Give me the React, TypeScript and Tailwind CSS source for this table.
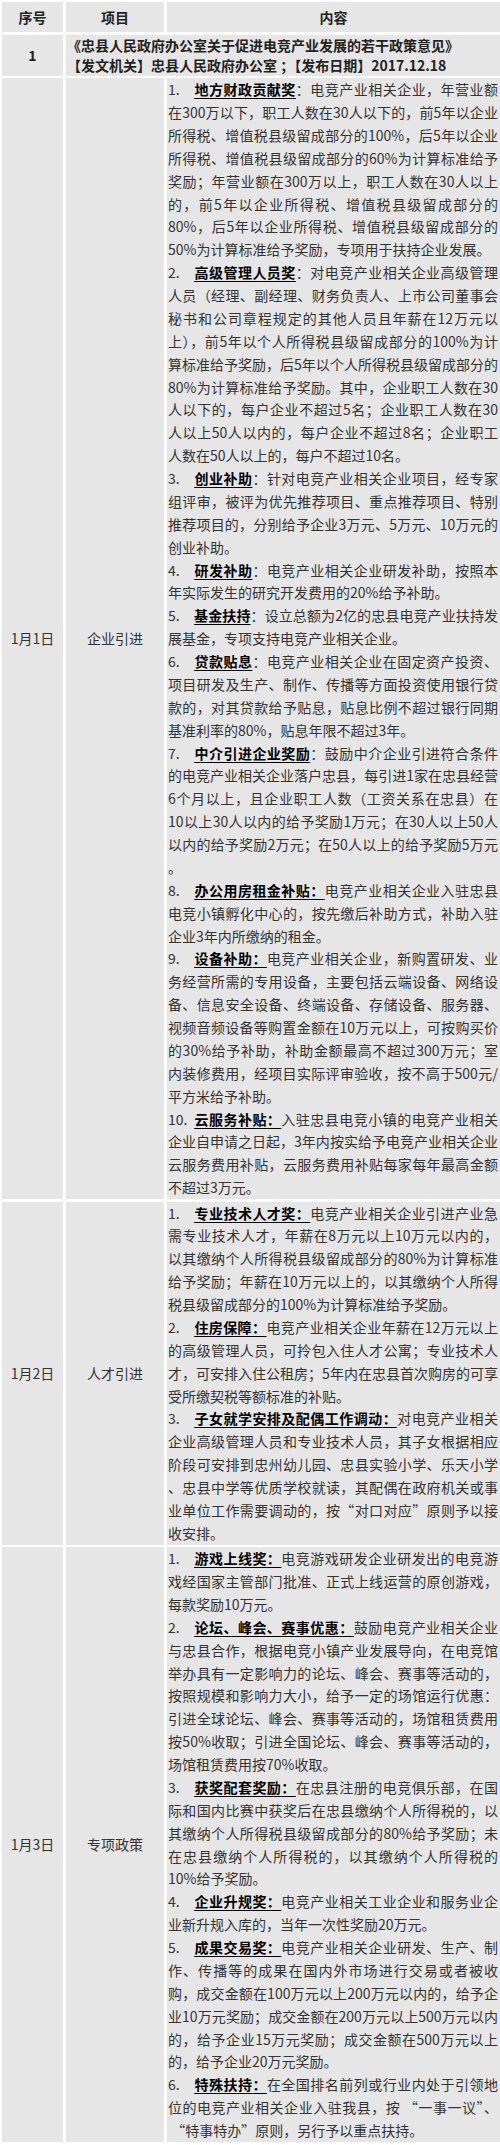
import React from 'react'

type Item = {
  n: string
  label: string
  boldColon?: boolean
  first: string
  rest: string[]
}

const row1: Item[] = [
  {
    n: '1.',
    label: '地方财政贡献奖',
    first: '电竞产业相关企业，年营业额',
    rest: [
      '在300万以下，职工人数在30人以下的，前5年以企业',
      '所得税、增值税县级留成部分的100%，后5年以企业',
      '所得税、增值税县级留成部分的60%为计算标准给予',
      '奖励；年营业额在300万以上，职工人数在30人以上',
      '的，前5年以企业所得税、增值税县级留成部分的',
      '80%，后5年以企业所得税、增值税县级留成部分的',
      '50%为计算标准给予奖励，专项用于扶持企业发展。',
    ],
  },
  {
    n: '2.',
    label: '高级管理人员奖',
    first: '对电竞产业相关企业高级管理',
    rest: [
      '人员（经理、副经理、财务负责人、上市公司董事会',
      '秘书和公司章程规定的其他人员且年薪在12万元以',
      '上），前5年以个人所得税县级留成部分的100%为计',
      '算标准给予奖励，后5年以个人所得税县级留成部分的',
      '80%为计算标准给予奖励。其中，企业职工人数在30',
      '人以下的，每户企业不超过5名；企业职工人数在30',
      '人以上50人以内的，每户企业不超过8名；企业职工',
      '人数在50人以上的，每户不超过10名。',
    ],
  },
  {
    n: '3.',
    label: '创业补助',
    first: '针对电竞产业相关企业项目，经专家',
    rest: [
      '组评审，被评为优先推荐项目、重点推荐项目、特别',
      '推荐项目的，分别给予企业3万元、5万元、10万元的',
      '创业补助。',
    ],
  },
  {
    n: '4.',
    label: '研发补助',
    first: '电竞产业相关企业研发补助，按照本',
    rest: ['年实际发生的研究开发费用的20%给予补助。'],
  },
  {
    n: '5.',
    label: '基金扶持',
    first: '设立总额为2亿的忠县电竞产业扶持发',
    rest: ['展基金，专项支持电竞产业相关企业。'],
  },
  {
    n: '6.',
    label: '贷款贴息',
    first: '电竞产业相关企业在固定资产投资、',
    rest: [
      '项目研发及生产、制作、传播等方面投资使用银行贷',
      '款的，对其贷款给予贴息，贴息比例不超过银行同期',
      '基准利率的80%，贴息年限不超过3年。',
    ],
  },
  {
    n: '7.',
    label: '中介引进企业奖励',
    first: '鼓励中介企业引进符合条件',
    rest: [
      '的电竞产业相关企业落户忠县，每引进1家在忠县经营',
      '6个月以上，且企业职工人数（工资关系在忠县）在',
      '10以上30人以内的给予奖励1万元；在30人以上50人',
      '以内的给予奖励2万元；在50人以上的给予奖励5万元',
      '。',
    ],
  },
  {
    n: '8.',
    label: '办公用房租金补贴',
    boldColon: true,
    first: '电竞产业相关企业入驻忠县',
    rest: ['电竞小镇孵化中心的，按先缴后补助方式，补助入驻', '企业3年内所缴纳的租金。'],
  },
  {
    n: '9.',
    label: '设备补助',
    boldColon: true,
    first: '电竞产业相关企业，新购置研发、业',
    rest: [
      '务经营所需的专用设备，主要包括云端设备、网络设',
      '备、信息安全设备、终端设备、存储设备、服务器、',
      '视频音频设备等购置金额在10万元以上，可按购买价',
      '的30%给予补助，补助金额最高不超过300万元；室',
      '内装修费用，经项目实际评审验收，按不高于500元/',
      '平方米给予补助。',
    ],
  },
  {
    n: '10.',
    label: '云服务补贴',
    boldColon: true,
    first: '入驻忠县电竞小镇的电竞产业相关',
    rest: [
      '企业自申请之日起，3年内按实给予电竞产业相关企业',
      '云服务费用补贴，云服务费用补贴每家每年最高金额',
      '不超过3万元。',
    ],
  },
]

const row2: Item[] = [
  {
    n: '1.',
    label: '专业技术人才奖',
    boldColon: true,
    first: '电竞产业相关企业引进产业急',
    rest: [
      '需专业技术人才，年薪在8万元以上10万元以内的，',
      '以其缴纳个人所得税县级留成部分的80%为计算标准',
      '给予奖励；年薪在10万元以上的，以其缴纳个人所得',
      '税县级留成部分的100%为计算标准给予奖励。',
    ],
  },
  {
    n: '2.',
    label: '住房保障',
    boldColon: true,
    first: '电竞产业相关企业年薪在12万元以上',
    rest: [
      '的高级管理人员，可拎包入住人才公寓；专业技术人',
      '才，可安排入住公租房；5年内在忠县首次购房的可享',
      '受所缴契税等额标准的补贴。',
    ],
  },
  {
    n: '3.',
    label: '子女就学安排及配偶工作调动',
    boldColon: true,
    first: '对电竞产业相关',
    rest: [
      '企业高级管理人员和专业技术人员，其子女根据相应',
      '阶段可安排到忠州幼儿园、忠县实验小学、乐天小学',
      '、忠县中学等优质学校就读，其配偶在政府机关或事',
      '业单位工作需要调动的，按“对口对应”原则予以接',
      '收安排。',
    ],
  },
]

const row3: Item[] = [
  {
    n: '1.',
    label: '游戏上线奖',
    boldColon: true,
    first: '电竞游戏研发企业研发出的电竞游',
    rest: ['戏经国家主管部门批准、正式上线运营的原创游戏，', '每款奖励10万元。'],
  },
  {
    n: '2.',
    label: '论坛、峰会、赛事优惠',
    boldColon: true,
    first: '鼓励电竞产业相关企业',
    rest: [
      '与忠县合作，根据电竞小镇产业发展导向，在电竞馆',
      '举办具有一定影响力的论坛、峰会、赛事等活动的，',
      '按照规模和影响力大小，给予一定的场馆运行优惠：',
      '引进全球论坛、峰会、赛事等活动的，场馆租赁费用',
      '按50%收取；引进全国论坛、峰会、赛事等活动的，',
      '场馆租赁费用按70%收取。',
    ],
  },
  {
    n: '3.',
    label: '获奖配套奖励',
    boldColon: true,
    first: '在忠县注册的电竞俱乐部，在国',
    rest: [
      '际和国内比赛中获奖后在忠县缴纳个人所得税的，以',
      '其缴纳个人所得税县级留成部分的80%给予奖励；未',
      '在忠县缴纳个人所得税的，以其缴纳个人所得税的',
      '10%给予奖励。',
    ],
  },
  {
    n: '4.',
    label: '企业升规奖',
    boldColon: true,
    first: '电竞产业相关工业企业和服务业企',
    rest: ['业新升规入库的，当年一次性奖励20万元。'],
  },
  {
    n: '5.',
    label: '成果交易奖',
    boldColon: true,
    first: '电竞产业相关企业研发、生产、制',
    rest: [
      '作、传播等的成果在国内外市场进行交易或者被收',
      '购，成交金额在100万元以上200万元以内的，给予企',
      '业10万元奖励；成交金额在200万元以上500万元以内',
      '的，给予企业15万元奖励；成交金额在500万元以上',
      '的，给予企业20万元奖励。',
    ],
  },
  {
    n: '6.',
    label: '特殊扶持',
    boldColon: true,
    first: '在全国排名前列或行业内处于引领地',
    rest: ['位的电竞产业相关企业入驻我县，按 “一事一议”、', '\u00a0“特事特办”原则，另行予以重点扶持。'],
  },
]

function Line({ last, children }: { last: boolean; children: React.ReactNode }) {
  return (
    <div className={last ? 'whitespace-nowrap' : 'whitespace-nowrap text-justify [text-align-last:justify]'}>
      {children}
    </div>
  )
}

function Para({ item }: { item: Item }) {
  return (
    <div>
      <Line last={item.rest.length === 0}>
        <span className="inline-block w-[26px]">{item.n}</span>
        <span className="font-bold text-black underline underline-offset-[3px]">
          {item.label}
          {item.boldColon && '：'}
        </span>
        {!item.boldColon && '：'}
        {item.first}
      </Line>
      {item.rest.map((l, i) => (
        <Line key={i} last={i === item.rest.length - 1}>
          {l}
        </Line>
      ))}
    </div>
  )
}

function Section({ date, name, items }: { date: string; name: string; items: Item[] }) {
  return (
    <>
      <div className="bg-[#e6e6e6] flex items-center justify-center">{date}</div>
      <div className="bg-[#e6e6e6] flex items-center justify-center">{name}</div>
      <div className="bg-[#e6e6e6] pl-[1px] pr-[2px] leading-[22.87px]">
        {items.map((it, i) => (
          <Para key={i} item={it} />
        ))}
      </div>
    </>
  )
}

export default function App() {
  return (
    <div className="w-[500px] min-h-[2145px] bg-white pt-[2px] pl-[2px] font-['Noto_Sans_CJK_SC',sans-serif] text-[14px] text-[#333333]">
      <div className="grid grid-cols-[61px_98px_333px] gap-x-[3px] gap-y-[2.5px]">
        <div className="bg-[#e6e6e6] h-[30px] flex items-center justify-center font-bold text-[#222]">序号</div>
        <div className="bg-[#e6e6e6] h-[30px] flex items-center justify-center font-bold text-[#222]">项目</div>
        <div className="bg-[#e6e6e6] h-[30px] flex items-center justify-center font-bold text-[#222]">内容</div>

        <div className="bg-[#e6e6e6] flex items-center justify-center font-bold text-[#222]">1</div>
        <div className="col-span-2 bg-[#e6e6e6] pl-[1px] leading-[20.6px] font-bold text-[#222]">
          <div>《忠县人民政府办公室关于促进电竞产业发展的若干政策意见》</div>
          <div>【发文机关】忠县人民政府办公室 ；【发布日期】2017.12.18</div>
        </div>

        <Section date="1月1日" name="企业引进" items={row1} />
        <Section date="1月2日" name="人才引进" items={row2} />
        <Section date="1月3日" name="专项政策" items={row3} />
      </div>
    </div>
  )
}
